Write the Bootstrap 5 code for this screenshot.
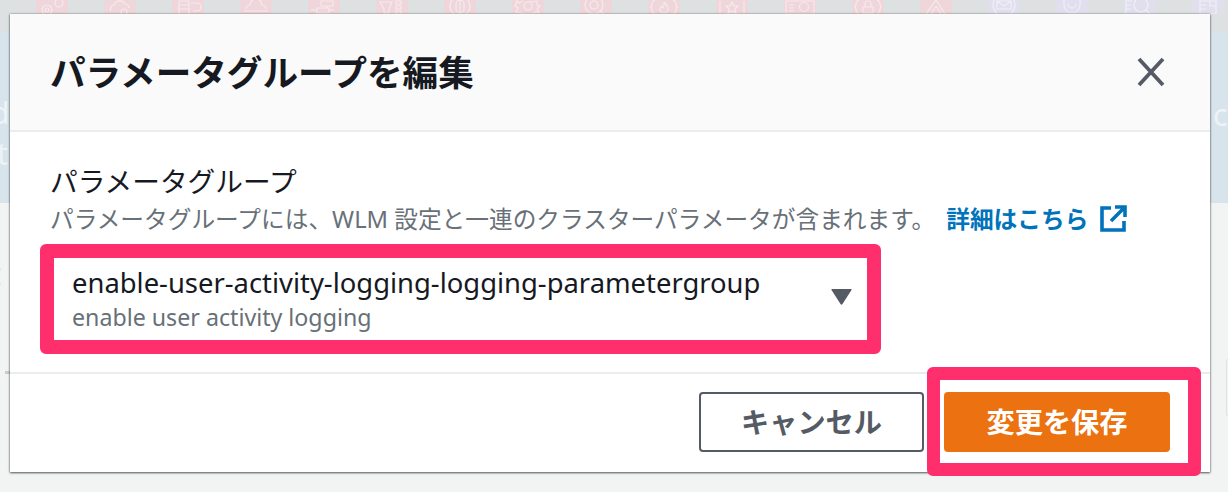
<!DOCTYPE html>
<html lang="ja">
<head>
<meta charset="utf-8">
<title>パラメータグループを編集</title>
<link href="https://cdn.jsdelivr.net/npm/bootstrap@5.3.0/dist/css/bootstrap.min.css" rel="stylesheet">
<style>
html,body{height:492px;overflow:hidden}
body{background:#f2f3f3;font-family:"Noto Sans","Noto Sans CJK JP",sans-serif;color:#16191f}
.stage{position:relative;width:1228px;height:492px;overflow:hidden}
.backdrop{position:absolute;inset:0}
.strip-top{height:32px;background:#dde1e2;padding-left:36px;gap:36px}
.tile{width:32px;height:14px;background:#eed6da;flex:none;overflow:hidden}
.tile.lilac{background:#e1dfee}
.tile svg{display:block;width:32px;height:14px;fill:none;stroke:#fff;stroke-opacity:.5;stroke-width:1.2}
.side{position:absolute;top:32px;height:171px;background:#d8e4ec;color:#eef3f6;font-size:30px;line-height:1;overflow:hidden}
.side-l{left:0;width:10px}
.side-r{right:0;width:18px}
.side span{position:absolute}
.side-l .frag1{left:-9px;top:66px}
.side-l .frag2{left:-3px;top:107px}
.side-r .frag1{left:3px;top:68px}
.pale-d{position:absolute;left:-9px;top:259px;font-size:30px;line-height:1;color:#dfe9f1;width:10px;overflow:hidden;text-align:right}
.left-tick{position:absolute;left:5px;top:371px;width:5px;height:3px;background:#c9cdce}
.right-box{position:absolute;left:1226px;top:359px;width:4px;height:57px;border:1px solid #e0e2e3;border-radius:3px}
.dialog{position:absolute;left:10px;top:14px;width:1200px;height:458px;border:0;border-radius:0;box-shadow:0 1px 2px rgba(40,50,50,.7),0 0 2px rgba(40,50,50,.5)}
.dialog .card-header{height:118px;background:#fafafa;border-bottom:2px solid #eaeded;border-radius:0;padding:0 45px 0 40px}
.dlg-title{font-size:35.6px;font-weight:700;margin:0;line-height:1.2;color:#16191f}
.close-x{width:28px;height:30px;color:#545b64}
.dialog .card-body{padding:31px 40px 0;height:240px;flex:none}
.fld-label{font-size:27.7px;line-height:36px;color:#16191f}
.fld-desc{font-size:23.7px;line-height:32px;color:#687078;white-space:nowrap;margin-top:4px}
.more{color:#0073bb;font-weight:700;text-decoration:none;margin-left:11px}
.ext{width:27px;height:27px;vertical-align:-4px;margin-left:12px}
.ring{margin:9px 0 0 -10px;width:841px;height:110px;border:14px solid #ff2f6e;border-radius:6px;background:#fff;padding:0 15px 0 18px}
.opt-main{font-size:27.4px;line-height:36px;color:#16191f;white-space:nowrap}
.opt-sub{font-size:23.2px;line-height:32px;color:#687078}
.caret-down{width:21px;height:16px;color:#545b64;margin-bottom:4px}
.dialog .card-footer{background:#fff;border-top:2px solid #eaeded;border-radius:0;padding:18px 40px 0 0;height:100px;gap:20px}
.act{height:60px;font-size:28.2px;font-weight:700;border-radius:4px;padding:0;line-height:1}
.act-cancel{width:225px;background:#fff;border:2px solid #545b64;color:#545b64}
.act-save{width:226px;background:#ec7211;border:0;color:#fff}
.save-wrap{position:relative;height:60px}
.save-ring{position:absolute;left:-17px;right:-31px;top:-25px;bottom:-24px;border:13px solid #ff2f6e;border-radius:6px;pointer-events:none}
</style>
</head>
<body>
<div class="stage">
  <div class="backdrop">
    <div class="strip-top d-flex">
      <div class="tile"><svg viewBox="0 0 32 14"><circle cx="23" cy="3" r="4"/><circle cx="11" cy="10" r="5"/><circle cx="11" cy="10" r="2"/></svg></div>
      <div class="tile"><svg viewBox="0 0 32 14"><path d="M7 11a4 4 0 0 1 3-6 6 6 0 0 1 11-1 4 4 0 0 1 4 4"/><circle cx="20" cy="12" r="3"/></svg></div>
      <div class="tile"><svg viewBox="0 0 32 14"><path d="M7 14V1h10v13M7 5h10M7 9h10M19 3h6a4 4 0 0 1 0 8h-4"/></svg></div>
      <div class="tile"><svg viewBox="0 0 32 14"><path d="M6 9a4 4 0 0 1 4-4 6 6 0 0 1 12 0 4 4 0 0 1 4 4M4 11h24"/></svg></div>
      <div class="tile"><svg viewBox="0 0 32 14"><path d="M13 1h12v5H13zM9 8h12v5H9zM3 10h6M21 10h5M19 6v2"/></svg></div>
      <div class="tile"><svg viewBox="0 0 32 14"><path d="M4 2h12l-3 7v4H8V9zM20 1h5v3h-5zM20 6h5v3h-5zM20 11h5v3h-5z"/></svg></div>
      <div class="tile"><svg viewBox="0 0 32 14"><circle cx="16" cy="6" r="10"/><rect x="12" y="0" width="8" height="13" rx="4"/><path d="M16 0v13"/></svg></div>
      <div class="tile"><svg viewBox="0 0 32 14"><path d="M11 1 7 3 5 1 3 6l3 2-2 4 4 1 4 1h8l4-2 3 1-2-4 3-3-3-1V1l-4 1-3-1"/><circle cx="16" cy="6" r="4"/></svg></div>
      <div class="tile"><svg viewBox="0 0 32 14"><circle cx="14" cy="5" r="9"/><circle cx="14" cy="5" r="4"/><path d="m20 11 6 5"/></svg></div>
      <div class="tile"><svg viewBox="0 0 32 14"><path d="M7 0Q4 1 4 4t-2 3q2 0 2 3t3 4M25 0q3 1 3 4t2 3q-2 0-2 3t-3 4M16 2q4 4 4 7a4 4 0 0 1-8 0q0-2 2-3 0 2 1 2t1-6"/></svg></div>
      <div class="tile"><svg viewBox="0 0 32 14"><path d="M4 14V1M28 14V1M16 2l1.800 4h4l-3 3 1 4-3.800-2-3.800 2 1-4-3-3h4zM8 14h16"/></svg></div>
      <div class="tile"><svg viewBox="0 0 32 14"><path d="M2 1h28v13H2zM5 5h5M5 8h5M5 11h5"/><circle cx="20" cy="7" r="4.500"/></svg></div>
      <div class="tile"><svg viewBox="0 0 32 14"><path d="M7 0Q4 1 4 4t-2 3q2 0 2 3t3 4M25 0q3 1 3 4t2 3q-2 0-2 3t-3 4M11 7h10v6H11zM13 7V4a3 3 0 0 1 6 0v3"/></svg></div>
      <div class="tile"><svg viewBox="0 0 32 14"><path d="M16 0 6 14M16 0l9 14M16 6l-5 8M16 6l5 8"/></svg></div>
      <div class="tile lilac"><svg viewBox="0 0 32 14"><circle cx="16" cy="5" r="11"/><path d="M9 1h14v8H9zM9 1l7 5 7-5"/></svg></div>
      <div class="tile lilac"><svg viewBox="0 0 32 14"><path d="M8 0v5a8 8 0 0 0 16 0V0M12 4a4 4 0 1 0 8 0"/></svg></div>
      <div class="tile lilac"><svg viewBox="0 0 32 14"><path d="M2 14V1h6M2 5h5M2 9h5"/><circle cx="17" cy="5" r="7"/><path d="m22 10 4 4"/></svg></div>
      <div class="tile lilac"><svg viewBox="0 0 32 14"><path d="M8 1h16v13H8zM8 5h6M8 9h6M18 1v5h6"/></svg></div>
    </div>
    <div class="side side-l"><span class="frag1">d</span><span class="frag2">t</span></div>
    <div class="side side-r"><span class="frag1">c</span></div>
    <div class="pale-d">d</div>
    <div class="left-tick"></div>
    <div class="right-box"></div>
  </div>
  <div class="card dialog">
    <div class="card-header d-flex align-items-center justify-content-between">
      <h2 class="dlg-title">パラメータグループを編集</h2>
      <svg class="close-x" viewBox="0 0 28 30" fill="none" stroke="currentColor" stroke-width="3.8"><path d="M2 2 26 28M26 2 2 28"/></svg>
    </div>
    <div class="card-body">
      <div class="fld-label">パラメータグループ</div>
      <div class="fld-desc">パラメータグループには、WLM 設定と一連のクラスターパラメータが含まれます。<a class="more" href="#">詳細はこちら<svg class="ext" viewBox="0 0 27 27" fill="none" stroke="currentColor" stroke-width="3.6"><path d="M11 3H2v22h22v-9M15 2h10v10M24 3 11 16"/></svg></a></div>
      <div class="ring d-flex align-items-center justify-content-between">
        <div>
          <div class="opt-main">enable-user-activity-logging-logging-parametergroup</div>
          <div class="opt-sub">enable user activity logging</div>
        </div>
        <svg class="caret-down" viewBox="0 0 21 16" fill="currentColor"><path d="M1 0h19q1 0 .5 1L11.500 15q-1 1.500-2 0L.5 1Q0 0 1 0z"/></svg>
      </div>
    </div>
    <div class="card-footer d-flex justify-content-end align-items-start">
      <button type="button" class="btn act act-cancel">キャンセル</button>
      <div class="save-wrap">
        <button type="button" class="btn act act-save">変更を保存</button>
        <div class="save-ring"></div>
      </div>
    </div>
  </div>
</div>
<script src="https://cdn.jsdelivr.net/npm/bootstrap@5.3.0/dist/js/bootstrap.bundle.min.js"></script>
</body>
</html>
